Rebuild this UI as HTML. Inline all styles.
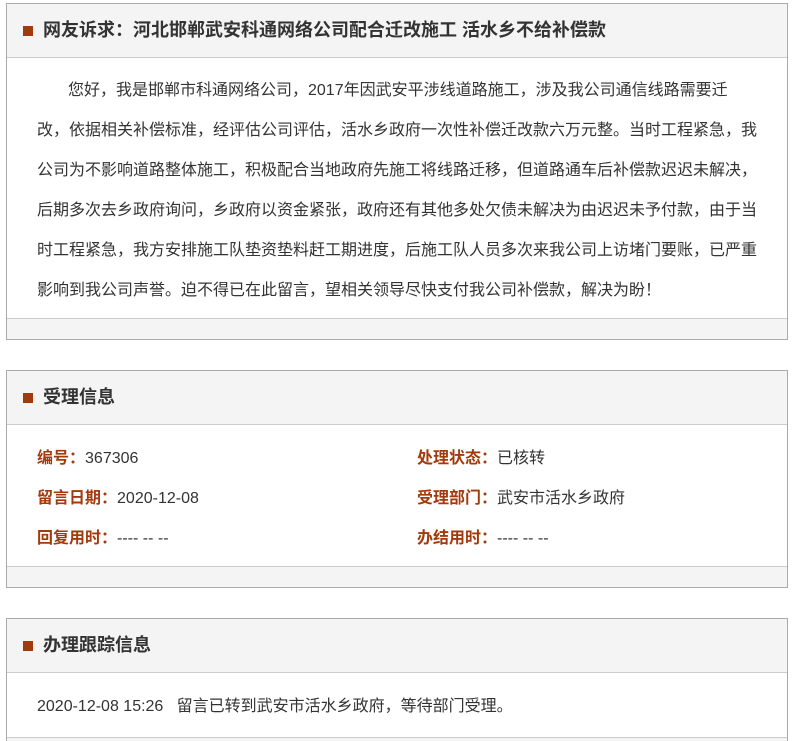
<html><head><style>
html,body{margin:0;overflow:hidden;height:741px}
body{background:#fff;font-family:"Liberation Sans","Noto Sans CJK SC",sans-serif;color:#333;width:793px;position:relative}
.box{position:absolute;left:6px;width:780px;border:1px solid #aaa;background:#fff}
.hd{background:#f4f4f4;border-bottom:1px solid #ccc;height:53px;line-height:53px;font-size:18px;font-weight:bold;color:#333;padding-left:36px;position:relative}
.hd:before{content:"";position:absolute;left:16px;top:22px;width:10px;height:10px;background:#a33a0e}
.ft{background:#f4f4f4;border-top:1px solid #ccc;height:20px}
.txt{font-size:16px;line-height:40px;padding:13px 0 7px 30px;width:722px;text-indent:31px}
.row{position:absolute;font-size:16px}
.row b{color:#a33a0e;font-weight:bold}
</style></head><body>
<div class="box" style="top:3px">
<div class="hd">网友诉求：河北邯郸武安科通网络公司配合迁改施工 活水乡不给补偿款</div>
<div class="txt">您好，我是邯郸市科通网络公司，2017年因武安平涉线道路施工，涉及我公司通信线路需要迁改，依据相关补偿标准，经评估公司评估，活水乡政府一次性补偿迁改款六万元整。当时工程紧急，我公司为不影响道路整体施工，积极配合当地政府先施工将线路迁移，但道路通车后补偿款迟迟未解决，后期多次去乡政府询问，乡政府以资金紧张，政府还有其他多处欠债未解决为由迟迟未予付款，由于当时工程紧急，我方安排施工队垫资垫料赶工期进度，后施工队人员多次来我公司上访堵门要账，已严重影响到我公司声誉。迫不得已在此留言，望相关领导尽快支付我公司补偿款，解决为盼！</div>
<div class="ft"></div>
</div>
<div class="box" style="top:370px;height:216px">
<div class="hd">受理信息</div>
<div class="row" style="left:30px;top:73px"><b>编号：</b>367306</div>
<div class="row" style="left:410px;top:73px"><b>处理状态：</b>已核转</div>
<div class="row" style="left:30px;top:113px"><b>留言日期：</b>2020-12-08</div>
<div class="row" style="left:410px;top:113px"><b>受理部门：</b>武安市活水乡政府</div>
<div class="row" style="left:30px;top:153px"><b>回复用时：</b>---- -- --</div>
<div class="row" style="left:410px;top:153px"><b>办结用时：</b>---- -- --</div>
<div class="ft" style="position:absolute;left:0;right:0;bottom:0"></div>
</div>
<div class="box" style="top:618px;height:140px">
<div class="hd">办理跟踪信息</div>
<div class="row" style="left:30px;top:73px">2020-12-08 15:26&nbsp;&nbsp;&nbsp;留言已转到武安市活水乡政府，等待部门受理。</div>
<div style="position:absolute;left:0;right:0;top:118px;border-top:1px solid #ccc;background:#f4f4f4;height:30px"></div>
</div>
</body></html>
